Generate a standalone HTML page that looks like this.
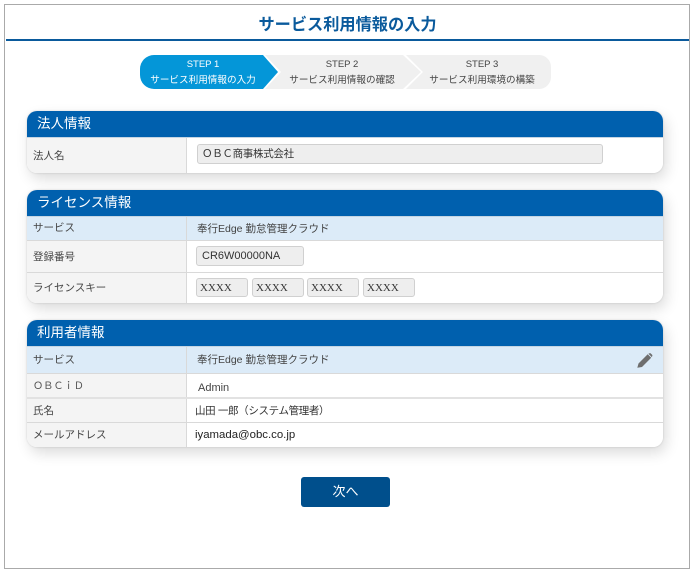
<!DOCTYPE html>
<html lang="ja">
<head>
<meta charset="utf-8">
<style>
html,body{margin:0;padding:0;background:#fff}
body{position:relative;width:695px;height:573px;overflow:hidden;font-family:"Liberation Sans","Noto Sans CJK JP",sans-serif;color:#444;font-size:10.5px}
.a{position:absolute;white-space:nowrap}
.frame{left:4px;top:4px;width:684px;height:563px;border:1px solid #aaa}
.panel{position:absolute;left:27px;width:636px;background:#fff;border-radius:10px;box-shadow:3px 6px 14px rgba(0,0,0,.14),0 0 2px rgba(0,0,0,.15);overflow:hidden}
.hd{position:absolute;left:0;top:0;width:636px;height:26px;background:#0060ae;color:#fff;font-size:13.5px;line-height:26px;text-indent:10px;border-bottom:1px solid #c5d5e3;box-sizing:content-box}
.row{position:absolute;left:0;width:636px;border-bottom:1px solid #d9d9d9;box-sizing:border-box;background:#fff}
.row .lb{position:absolute;left:0;top:0;bottom:0;width:159px;background:#f4f4f4;border-right:1px solid #d9d9d9;text-indent:6px;box-sizing:content-box}
.row.bl{background:#dcebf8}
.row.bl .lb{background:#dcebf8}
.row .v{position:absolute;left:170px;white-space:nowrap}
.inp{position:absolute;background:#eee;border:1px solid #d0d0d0;border-radius:3px;box-sizing:border-box;color:#333;white-space:nowrap}
.x{font-family:"Liberation Serif",serif;font-size:11px;line-height:19px;padding-left:3px;height:19px;top:5px;width:52px}
.st{position:absolute;text-align:center;font-size:9.6px;color:#444}
</style>
</head>
<body>
<div class="a frame"></div>
<div class="a" style="left:6px;top:39px;width:683px;height:2px;background:#0a5a9c"></div>
<div class="a" style="left:6px;top:14px;width:683px;text-align:center;font-size:16.2px;font-weight:bold;line-height:22px;color:#0a5a9c">サービス利用情報の入力</div>

<svg class="a" style="left:140px;top:55px" width="411" height="34" viewBox="0 0 411 34">
<path d="M125 0H263L281 17L263 34H125L141 17Z" fill="#f0f0f0"/>
<path d="M266 0H399a12 12 0 0 1 12 12V22a12 12 0 0 1-12 12H266L283 17Z" fill="#f0f0f0"/>
<path d="M14 0H123L138 17L123 34H14A14 14 0 0 1 0 20V14A14 14 0 0 1 14 0Z" fill="#0496d8"/>
</svg>
<div class="st" style="left:142px;top:58px;width:122px;color:#fff;line-height:13px;font-size:9.5px">STEP 1</div>
<div class="st" style="left:142px;top:74px;width:122px;color:#fff;line-height:14px">サービス利用情報の入力</div>
<div class="st" style="left:281px;top:58px;width:122px;line-height:13px;font-size:9.5px">STEP 2</div>
<div class="st" style="left:281px;top:74px;width:122px;line-height:14px">サービス利用情報の確認</div>
<div class="st" style="left:421px;top:58px;width:122px;line-height:13px;font-size:9.5px">STEP 3</div>
<div class="st" style="left:421px;top:74px;width:122px;line-height:14px">サービス利用環境の構築</div>

<div class="panel" style="top:111px;height:62px">
 <div class="hd">法人情報</div>
 <div class="row" style="top:27px;height:35px;border:0"><div class="lb" style="line-height:37px">法人名</div></div>
 <div class="inp" style="left:170px;top:33px;width:406px;height:20px;line-height:19px;padding-left:4px;letter-spacing:-.3px">ＯＢＣ商事株式会社</div>
</div>

<div class="panel" style="top:190px;height:113px">
 <div class="hd">ライセンス情報</div>
 <div class="row bl" style="top:27px;height:24px"><div class="lb" style="line-height:22px">サービス</div><div class="v" style="top:3px;line-height:18px">奉行Edge 勤怠管理クラウド</div></div>
 <div class="row" style="top:51px;height:32px"><div class="lb" style="line-height:32px">登録番号</div>
  <div class="inp" style="left:169px;top:5px;width:108px;height:20px;line-height:19px;padding-left:5px;font-size:11px">CR6W00000NA</div></div>
 <div class="row" style="top:83px;height:30px;border:0"><div class="lb" style="line-height:30px">ライセンスキー</div>
  <div class="inp x" style="left:169px">XXXX</div>
  <div class="inp x" style="left:225px">XXXX</div>
  <div class="inp x" style="left:280px">XXXX</div>
  <div class="inp x" style="left:336px">XXXX</div></div>
</div>

<div class="panel" style="top:320px;height:127px">
 <div class="hd">利用者情報</div>
 <div class="row bl" style="top:27px;height:27px"><div class="lb" style="line-height:27px">サービス</div><div class="v" style="top:5px;line-height:17px">奉行Edge 勤怠管理クラウド</div>
  <svg style="position:absolute;left:610px;top:6px" width="16" height="15" viewBox="0 0 16 15"><path d="M0.3 14.8L1.5 10.5L10.7 1.3L14.2 4.8L5 14Z M11.4 0.8L12.6 0.2Q13.2 0 13.7 0.4L15.2 1.9Q15.6 2.4 15.3 3L14.8 4.1Z" fill="#6e6e6e"/></svg></div>
 <div class="row" style="top:54px;height:25px;border-bottom:2px solid #e2e2e2"><div class="lb" style="line-height:26px;font-size:10.2px;color:#555">ＯＢＣｉＤ</div><div class="v" style="left:171px;top:7px;line-height:14px;font-size:11px">Admin</div></div>
 <div class="row" style="top:79px;height:24px"><div class="lb" style="line-height:24px">氏名</div><div class="v" style="left:168px;top:4px;line-height:16px;color:#333;letter-spacing:-.35px">山田 一郎（システム管理者）</div></div>
 <div class="row" style="top:103px;height:24px;border:0"><div class="lb" style="line-height:24px">メールアドレス</div><div class="v" style="left:168px;top:4px;line-height:16px;color:#222;font-size:11.4px">iyamada@obc.co.jp</div></div>
</div>

<div class="a" style="left:301px;top:477px;width:89px;height:30px;background:#004f8c;border-radius:3px;color:#fff;text-align:center;font-size:13px;line-height:30px">次へ</div>
</body>
</html>
